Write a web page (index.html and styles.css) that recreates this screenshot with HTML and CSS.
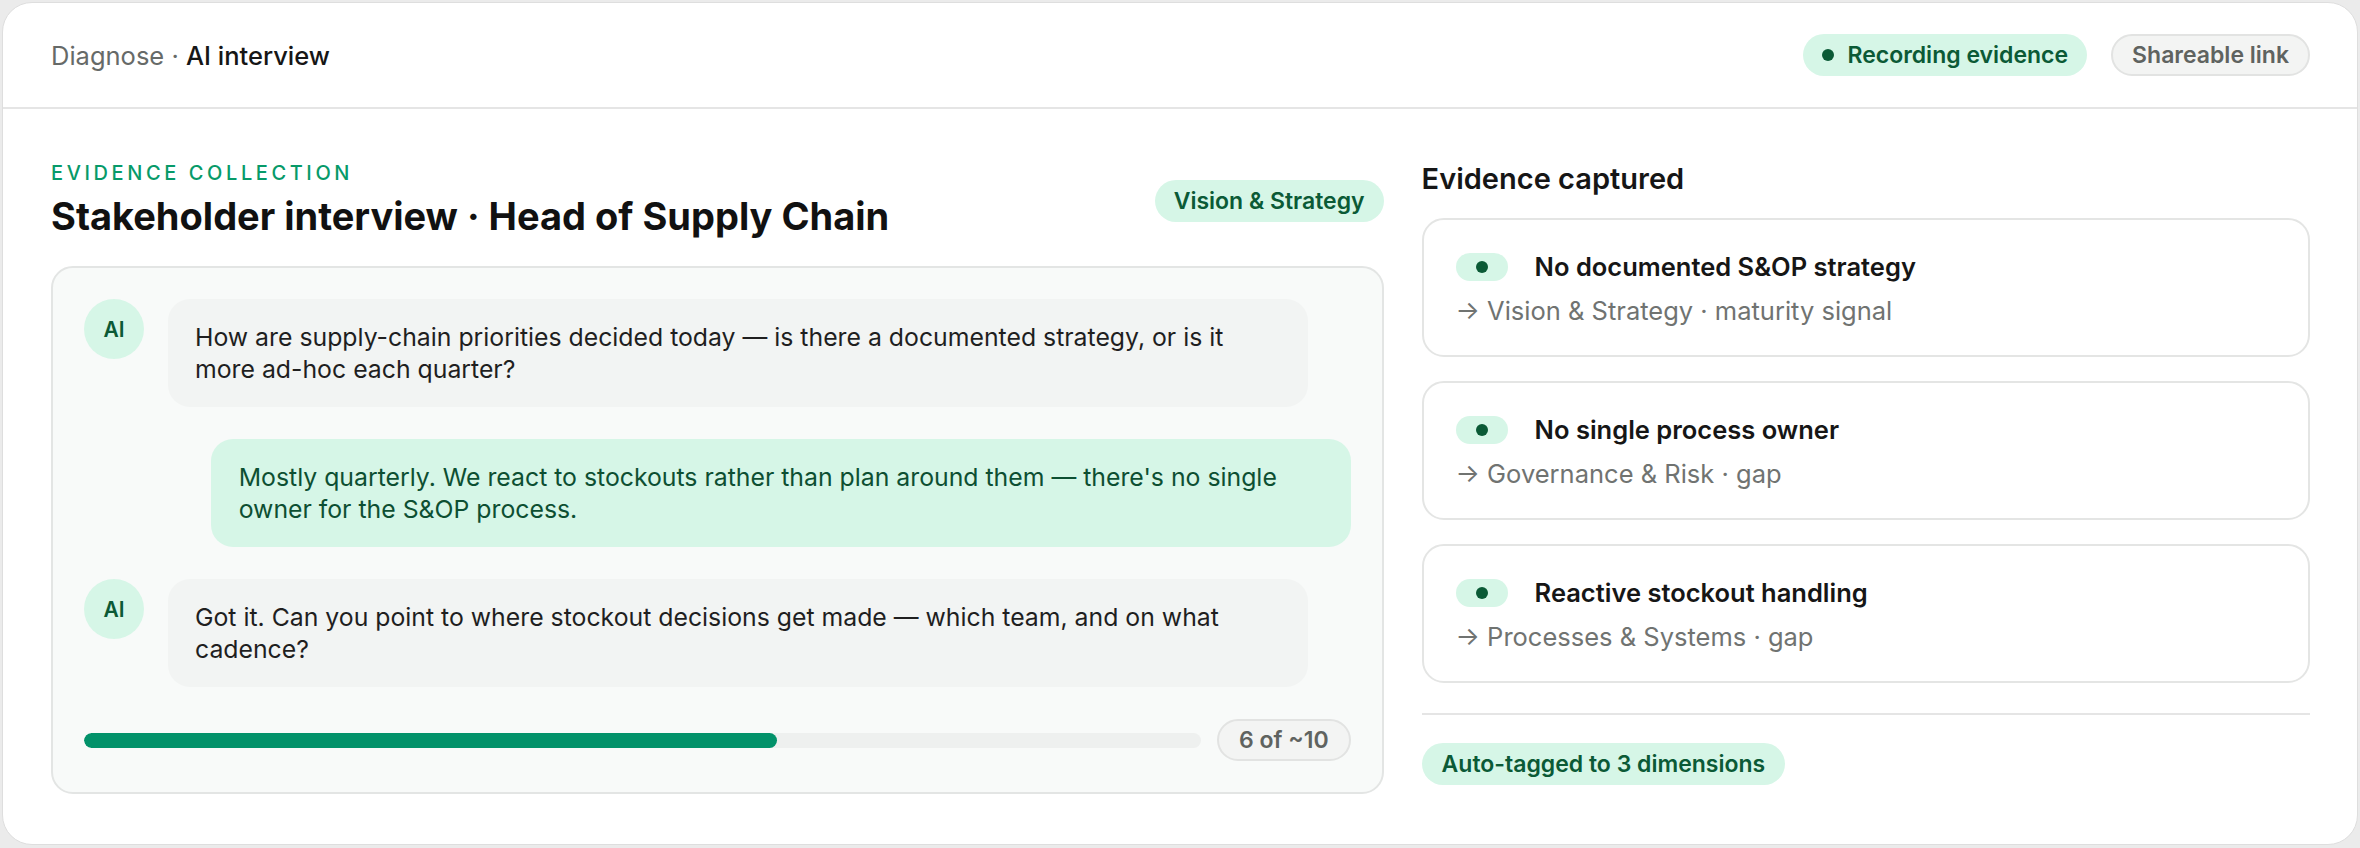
FILE: index.html
```html
<!DOCTYPE html>
<html lang="en">
<head>
  <meta charset="UTF-8" />
  <meta name="viewport" content="width=device-width, initial-scale=1.0"/>
  <title>Diagnose · AI interview</title>
  <link rel="stylesheet" href="styles.css">
</head>
<body>

  <div class="card">
    <header class="topbar">
      <div class="crumbs">Diagnose · <strong>AI interview</strong></div>
      <div class="topbar-actions">
        <span class="pill pill-green"><span class="dot"></span>Recording evidence</span>
        <span class="pill pill-grey">Shareable link</span>
      </div>
    </header>

    <div class="body">
      <section class="interview">
        <div class="interview-head">
          <div>
            <div class="eyebrow">EVIDENCE COLLECTION</div>
            <h1>Stakeholder interview · Head of Supply Chain</h1>
          </div>
          <span class="pill pill-green">Vision &amp; Strategy</span>
        </div>

        <div class="chat">
          <div class="msg">
            <div class="avatar">AI</div>
            <div class="bubble">How are supply-chain priorities decided today — is there a documented strategy, or is it more ad-hoc each quarter?</div>
          </div>

          <div class="msg msg-user">
            <div class="bubble">Mostly quarterly. We react to stockouts rather than plan around them — there's no single owner for the S&amp;OP process.</div>
          </div>

          <div class="msg">
            <div class="avatar">AI</div>
            <div class="bubble">Got it. Can you point to where stockout decisions get made — which team, and on what cadence?</div>
          </div>

          <div class="progress">
            <div class="track"><div class="fill" style="width: 62%"></div></div>
            <span class="pill pill-grey">6 of ~10</span>
          </div>
        </div>
      </section>

      <aside class="evidence">
        <h2>Evidence captured</h2>

        <div class="item">
          <div class="item-title"><span class="tag"><span class="dot"></span></span>No documented S&amp;OP strategy</div>
          <div class="item-meta">→ Vision &amp; Strategy · maturity signal</div>
        </div>

        <div class="item">
          <div class="item-title"><span class="tag"><span class="dot"></span></span>No single process owner</div>
          <div class="item-meta">→ Governance &amp; Risk · gap</div>
        </div>

        <div class="item">
          <div class="item-title"><span class="tag"><span class="dot"></span></span>Reactive stockout handling</div>
          <div class="item-meta">→ Processes &amp; Systems · gap</div>
        </div>

        <div class="evidence-foot">
          <span class="pill pill-green">Auto-tagged to 3 dimensions</span>
        </div>
      </aside>
    </div>
  </div>

</body>
</html>
```

FILE: styles.css
```css
* {
  box-sizing: border-box;
  margin: 0;
  padding: 0;
}

body {
  background-color: #ebebeb;
  color: #1a1a1a;
  font-family: Inter, "Noto Sans", sans-serif;
  padding: 2px 2px 3px 2px;
  height: 848px;
}

.card {
  background-color: white;
  border: 1px solid #dedede;
  border-radius: 30px;
  height: 843px;
  overflow: hidden;
}

.topbar {
  height: 106px;
  border-bottom: 2px solid #e5e5e5;
  display: flex;
  align-items: center;
  justify-content: space-between;
  padding: 0 47px 0 48px;
}

.crumbs {
  font-size: 25.5px;
  color: #666a68;
}

.crumbs strong {
  color: #161616;
  font-weight: 500;
}

.topbar-actions {
  display: flex;
  gap: 24px;
}

.pill {
  display: inline-flex;
  align-items: center;
  height: 42px;
  padding: 0 19px;
  border-radius: 21px;
  font-size: 23px;
  font-weight: 600;
  white-space: nowrap;
}

.pill-green {
  background-color: #d6f6e7;
  color: #0b5a36;
}

.pill-grey {
  background-color: #f3f4f3;
  border: 2px solid #e2e3e2;
  color: #5f6360;
}

.dot {
  width: 12px;
  height: 12px;
  border-radius: 50%;
  background-color: #0b5a36;
  display: inline-block;
}

.pill .dot {
  margin-right: 13px;
}

.body {
  display: grid;
  grid-template-columns: 3fr 2fr;
  gap: 38px;
  padding: 53px 47px 0 48px;
}

.interview-head {
  display: flex;
  justify-content: space-between;
  align-items: center;
  margin-bottom: 27px;
}

.eyebrow {
  color: #079a69;
  font-size: 20px;
  font-weight: 500;
  letter-spacing: 3.6px;
  margin-bottom: 8px;
  margin-top: -1px;
}

h1 {
  font-size: 38px;
  font-weight: 700;
  color: #111;
}

.chat {
  background-color: #f8faf9;
  border: 2px solid #e3e5e4;
  border-radius: 22px;
  padding: 31px;
  display: flex;
  flex-direction: column;
  gap: 32px;
}

.msg {
  display: flex;
  align-items: flex-start;
  gap: 24px;
}

.msg-user {
  justify-content: flex-end;
}

.avatar {
  flex: 0 0 60px;
  height: 60px;
  border-radius: 50%;
  background-color: #d6f6e7;
  color: #0b5a36;
  font-size: 21px;
  font-weight: 600;
  display: flex;
  align-items: center;
  justify-content: center;
}

.bubble {
  max-width: 90%;
  background-color: #f2f4f3;
  border-radius: 22px;
  padding: 22px 27px;
  font-size: 24.8px;
  line-height: 32px;
  color: #1f1f1f;
}

.msg-user .bubble {
  background-color: #d6f6e7;
  color: #0d4f32;
  padding-left: 28px;
}

.progress {
  display: flex;
  align-items: center;
  gap: 16px;
}

.track {
  flex: 1;
  height: 15px;
  border-radius: 8px;
  background-color: #eef0ef;
  overflow: hidden;
}

.fill {
  height: 100%;
  background-color: #02926a;
  border-radius: 8px;
}

.progress .pill {
  padding: 0 20px;
}

.evidence h2 {
  font-size: 29px;
  font-weight: 600;
  color: #161616;
  margin: 0 0 22px 0;
  line-height: 34px;
}

.item {
  border: 2px solid #e4e5e4;
  border-radius: 22px;
  padding: 32px 32px 28px 32px;
  margin-bottom: 24px;
}

.item-title {
  display: flex;
  align-items: center;
  gap: 27px;
  font-size: 25.5px;
  line-height: 30px;
  font-weight: 600;
  color: #161616;
  margin-bottom: 13px;
}

.tag {
  width: 52px;
  height: 28px;
  border-radius: 14px;
  background-color: #d6f6e7;
  display: flex;
  align-items: center;
  justify-content: center;
}

.item-meta {
  font-size: 25.5px;
  color: #707371;
  line-height: 32px;
}

.evidence-foot {
  border-top: 2px solid #e5e5e5;
  margin-top: 30px;
  padding-top: 28px;
}

.evidence-foot .pill {
  padding: 0 20px;
}
```
